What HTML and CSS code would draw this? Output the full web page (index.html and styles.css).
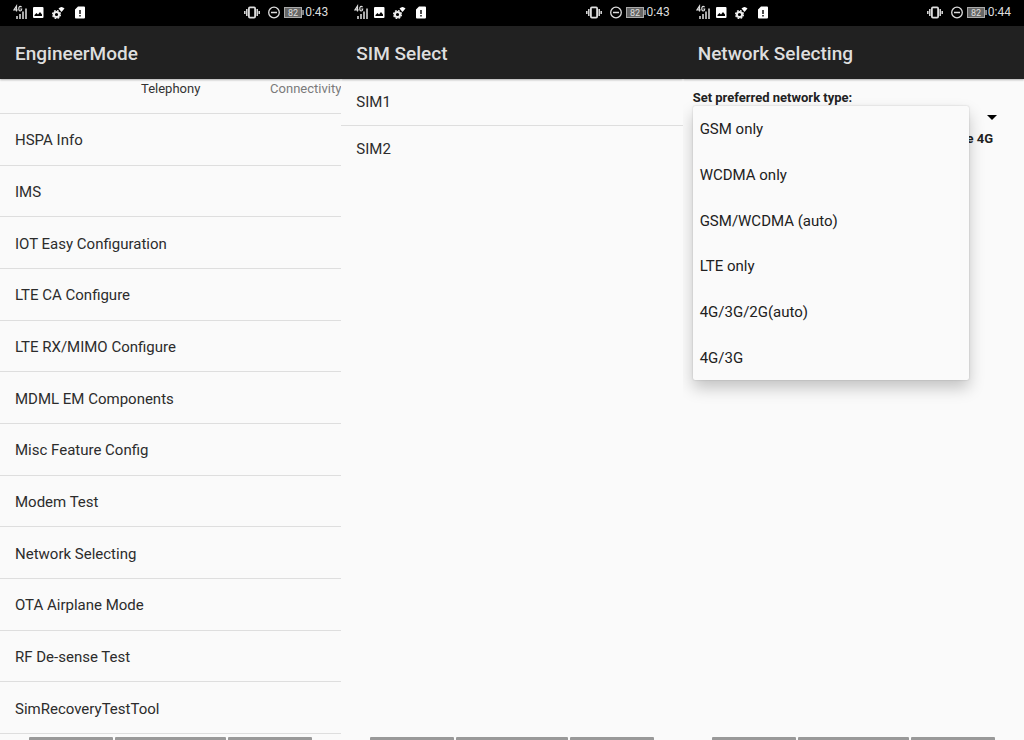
FILE: index.html
```
<!DOCTYPE html>
<html lang="en">
<head>
  <meta charset="UTF-8">
  <meta name="viewport" content="width=device-width, initial-scale=1.0">
  <title>EngineerMode - Network Selecting</title>
  <link rel="stylesheet" href="styles.css">
</head>
<body>
  <!-- shared status bar icons -->
  <svg class="sprite" aria-hidden="true">
    <symbol id="icons-left" viewBox="0 0 74 16">
      <g fill="none" stroke="#ddd" stroke-width="1.200">
        <path d="M3.500 7.500V2L1 5.800H4.600 M8.600 3.200Q7 1.600 6 3.200Q5.300 6.800 7.300 7Q8.700 6.800 8.700 5H7.300"/>
      </g>
      <g fill="#aaa">
        <path d="M3 12h2v3h-2z M6 10h2v5h-2z M9 7.500h2v7.500h-2z M12 4.500h2v10.500h-2z"/>
      </g>
      <path fill="#fff" fill-rule="evenodd" d="M21 3h8.500q1 0 1 1v9q0 1-1 1H21q-1 0-1-1V4q0-1 1-1z M21.500 12h7.500v-1.500l-2-2.500-2 2.500-1.500-1.500-2 2z"/>
      <circle cx="43.500" cy="10.500" r="2.600" fill="none" stroke="#eee" stroke-width="2"/>
      <circle cx="43.500" cy="10.500" r="3.900" fill="none" stroke="#eee" stroke-width="1.400" stroke-dasharray="1.800 1.260"/>
      <path fill="#fff" d="M45.500 4.500Q48.500 1.500 51.500 4.500L48.500 8z"/>
      <path fill="#fff" fill-rule="evenodd" d="M65 2.500h6q1 0 1 1v10q0 1-1 1h-8q-1 0-1-1V5.500z M66.300 6v4h1.400V6z M66.300 11v1.500h1.400V11z"/>
    </symbol>
    <symbol id="icons-right" viewBox="0 0 60 16">
      <g fill="none" stroke="#ddd">
        <rect x="4.900" y="3.400" width="6.200" height="10.200" rx="1" stroke-width="1.800"/>
        <path stroke-width="1.500" d="M2.800 5v7 M13.200 5v7 M.8 7v3 M15.200 7v3"/>
        <circle cx="30" cy="8.500" r="5.300" stroke-width="1.300"/>
        <path stroke-width="1.500" d="M27 8.500h6"/>
      </g>
      <rect x="40.500" y="3.500" width="17" height="10" fill="#666" stroke="#aaa"/>
      <rect x="58.300" y="6" width="1.500" height="5" fill="#aaa"/>
      <text x="49" y="11.500" text-anchor="middle" class="battery-text">82</text>
    </symbol>
  </svg>

  <main class="screens">
    <section class="screen">
      <div class="status-bar">
        <svg class="icons-left" aria-hidden="true"><use href="#icons-left"/></svg>
        <svg class="icons-right" aria-hidden="true"><use href="#icons-right"/></svg>
        <span class="clock">0:43</span>
      </div>
      <h1 class="title-bar">EngineerMode</h1>
      <nav class="tabs">
        <button class="tab active">Telephony</button>
        <button class="tab">Connectivity</button>
      </nav>
      <ul class="menu">
        <li><button>HSPA Info</button></li>
        <li><button>IMS</button></li>
        <li><button>IOT Easy Configuration</button></li>
        <li><button>LTE CA Configure</button></li>
        <li><button>LTE RX/MIMO Configure</button></li>
        <li><button>MDML EM Components</button></li>
        <li><button>Misc Feature Config</button></li>
        <li><button>Modem Test</button></li>
        <li><button>Network Selecting</button></li>
        <li><button>OTA Airplane Mode</button></li>
        <li><button>RF De-sense Test</button></li>
        <li><button>SimRecoveryTestTool</button></li>
      </ul>
      <div class="bottom-strip"><i></i><i></i><i></i></div>
    </section>

    <section class="screen">
      <div class="status-bar">
        <svg class="icons-left" aria-hidden="true"><use href="#icons-left"/></svg>
        <svg class="icons-right" aria-hidden="true"><use href="#icons-right"/></svg>
        <span class="clock">0:43</span>
      </div>
      <h1 class="title-bar">SIM Select</h1>
      <ul class="sim-list">
        <li><button>SIM1</button></li>
        <li><button>SIM2</button></li>
      </ul>
      <div class="bottom-strip"><i></i><i></i><i></i></div>
    </section>

    <section class="screen">
      <div class="status-bar">
        <svg class="icons-left" aria-hidden="true"><use href="#icons-left"/></svg>
        <svg class="icons-right" aria-hidden="true"><use href="#icons-right"/></svg>
        <span class="clock">0:44</span>
      </div>
      <h1 class="title-bar">Network Selecting</h1>
      <div class="network">
        <label for="network_type">Set preferred network type:</label>
        <div class="spinner">
          <select id="network_type"><option></option></select>
          <svg class="arrow" viewBox="0 0 10 5" aria-hidden="true"><path d="M0 0h10L5 5z"/></svg>
          <ul class="popup">
            <li><button>GSM only</button></li>
            <li><button>WCDMA only</button></li>
            <li><button>GSM/WCDMA (auto)</button></li>
            <li><button>LTE only</button></li>
            <li><button>4G/3G/2G(auto)</button></li>
            <li><button>4G/3G</button></li>
          </ul>
        </div>
        <p class="note">e 4G</p>
      </div>
      <div class="bottom-strip"><i></i><i></i><i></i></div>
    </section>
  </main>
</body>
</html>
```
FILE: styles.css
```
* { box-sizing: border-box; }
body {
  margin: 0; background-color: #fafafa; color: #2c2c2c;
  font-family: Roboto, "Liberation Sans", sans-serif; font-size: 15px;
}
ul { list-style: none; margin: 0; padding: 0; }
button {
  padding: 0; border: none; background: none; color: inherit; font: inherit; text-align: left; cursor: pointer;
}
.sprite { display: none; }
.screens { display: grid; grid-template-columns: repeat(3, 1fr); min-height: 100vh; }
.screen { display: flex; flex-direction: column; min-width: 0; overflow: hidden; }

.status-bar {
  display: flex; align-items: center; height: 26px; padding: 0 13px 2px;
  background-color: #000; color: #ddd;
}
.icons-left { width: 74px; height: 16px; margin-right: auto; }
.icons-right { width: 60px; height: 16px; margin-right: 1px; }
.battery-text { font-size: 9px; fill: #ddd; }
.clock { font-size: 12px; line-height: 24px; }
.title-bar {
  position: relative; margin: 0; height: 53px; padding: 0 15px; line-height: 55px;
  background-color: #212121; color: #dedede; font-size: 19px; font-weight: 500;
  box-shadow: 0 1px 2px rgba(0, 0, 0, 0.3);
}

.tabs {
  display: grid; grid-template-columns: 1fr auto; align-items: start; height: 35px;
  padding-top: 2px; border-bottom: 1px solid #dedede; font-size: 13px; line-height: 16px; color: #7a7a7a;
}
.tab.active { grid-column: 1 / -1; grid-row: 1; text-align: center; color: #333; }
.tab + .tab { grid-column: 2; grid-row: 1; }
.menu { flex: 1; display: flex; flex-direction: column; }
.menu li { flex: 1; border-bottom: 1px solid #dedede; }
.menu button { width: 100%; height: 100%; padding: 2px 15px 0; }

.sim-list { flex: 1; }
.sim-list button { width: 100%; height: 46px; padding: 0 15px; }
.sim-list li + li { border-top: 1px solid #dedede; }

.network { flex: 1; padding: 10px 10px 0; color: #222; font-size: 13px; font-weight: 700; }
.network label { display: block; line-height: 18px; }
.spinner { position: relative; height: 24px; }
.spinner select { width: 100%; height: 24px; border: none; background: none; appearance: none; }
.arrow { position: absolute; right: 17px; top: 8px; width: 10px; height: 5px; pointer-events: none; }
.popup {
  position: absolute; left: 0; right: 45px; top: -1px; height: 37vh; display: flex; flex-direction: column;
  border-radius: 2px; background-color: #fafafa; color: #212121; font-size: 15px; font-weight: 400;
  box-shadow: 0 0 2px rgba(0, 0, 0, 0.2), 0 8px 16px rgba(0, 0, 0, 0.22);
}
.popup li { flex: 1; }
.popup button { width: 100%; height: 100%; padding: 1px 7px 0; }
.note { margin: 0; padding-right: 21px; text-align: right; line-height: 16px; }

.bottom-strip {
  display: grid; grid-template-columns: 84fr 111fr 84fr; gap: 2px; height: 6px; padding: 3px 29px 0;
}
.bottom-strip i { background-color: #999; border-radius: 1px 1px 0 0; }
```
